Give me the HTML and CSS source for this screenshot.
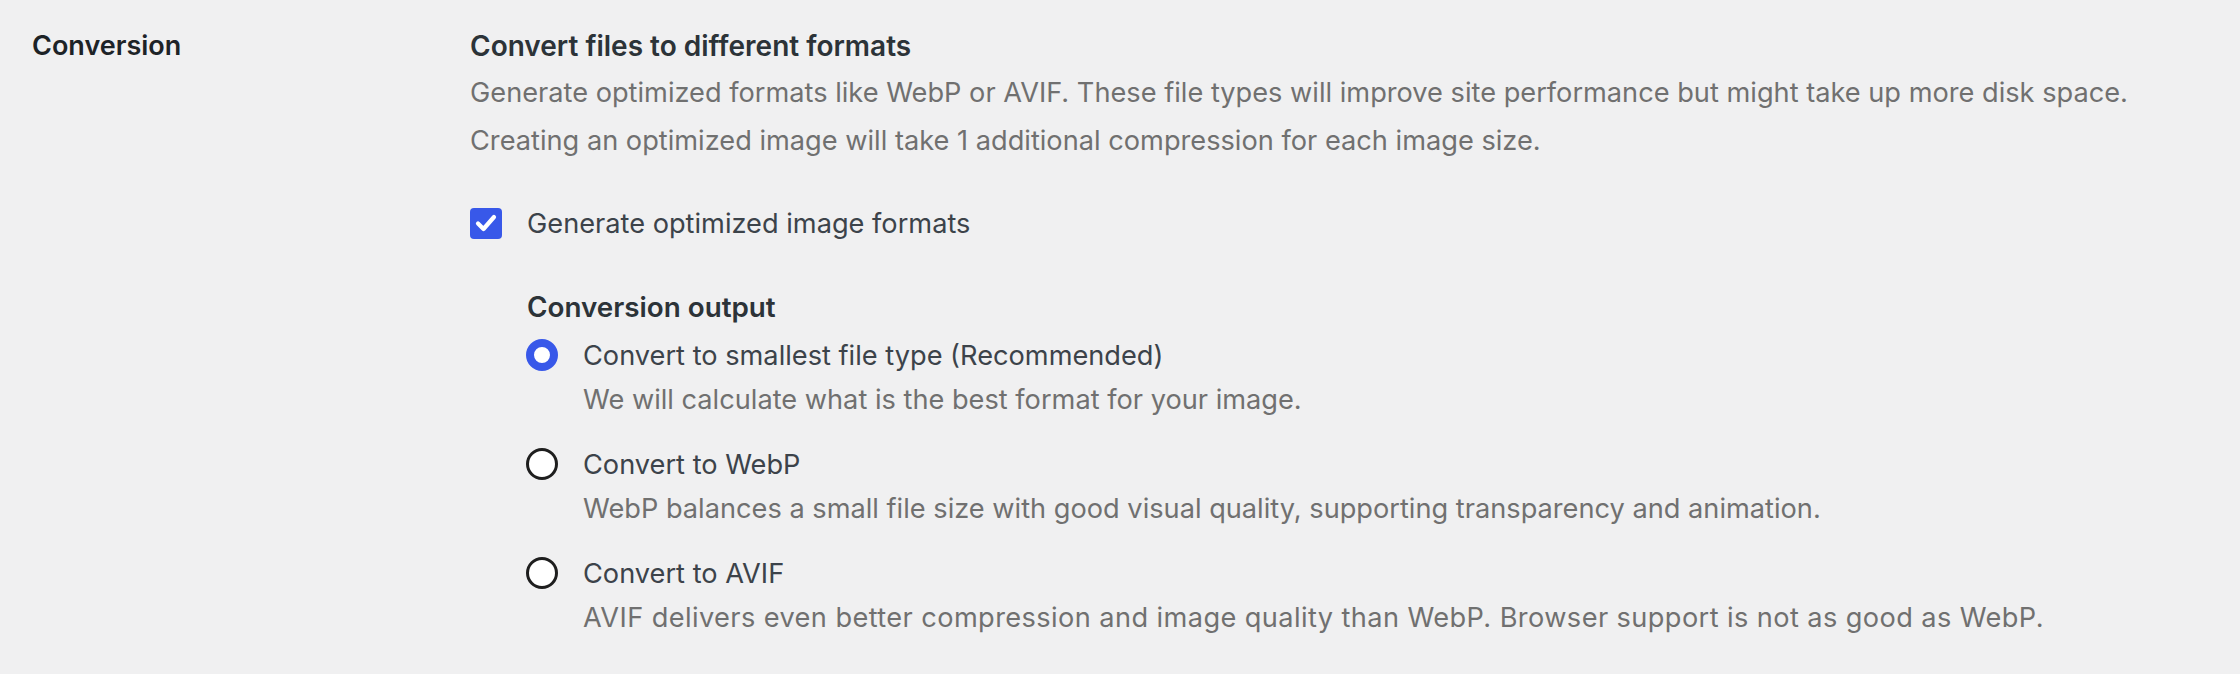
FILE: index.html
```html
<!DOCTYPE html>
<html>
<head>
    <title>Conversion settings</title>
    <link rel="stylesheet" href="styles.css">
</head>
<body>
    <div class="settings-row">
        <div class="row-label">Conversion</div>

        <div class="row-content">
            <h3 class="section-title">Convert files to different formats</h3>
            <p class="section-desc">Generate optimized formats like WebP or AVIF. These file types will improve site performance but might take up more disk space.<br>Creating an optimized image will take 1 additional compression for each image size.</p>

            <!-- Main toggle -->
            <label class="check-row">
                <span class="check-box">
                    <svg width="22" height="18" viewBox="0 0 22 18"><path d="M3 9.5 L8.5 15 L19 3" fill="none" stroke="#fff" stroke-width="4.2" stroke-linecap="round" stroke-linejoin="round"/></svg>
                </span>
                <span>Generate optimized image formats</span>
            </label>

            <!-- Output options -->
            <div class="output-group">
                <div class="output-title">Conversion output</div>

                <div class="radio-list">
                    <div class="radio-option">
                        <label class="radio-row">
                            <span class="radio-dot checked"></span>
                            <span>Convert to smallest file type (Recommended)</span>
                        </label>
                        <div class="radio-desc">We will calculate what is the best format for your image.</div>
                    </div>

                    <div class="radio-option">
                        <label class="radio-row">
                            <span class="radio-dot"></span>
                            <span>Convert to WebP</span>
                        </label>
                        <div class="radio-desc">WebP balances a small file size with good visual quality, supporting transparency and animation.</div>
                    </div>

                    <div class="radio-option">
                        <label class="radio-row">
                            <span class="radio-dot"></span>
                            <span>Convert to AVIF</span>
                        </label>
                        <div class="radio-desc wide">AVIF delivers even better compression and image quality than WebP. Browser support is not as good as WebP.</div>
                    </div>
                </div>
            </div>
        </div>
    </div>
</body>
</html>
```

FILE: styles.css
```css
body {
    margin: 0;
    background: #f0f0f1;
    font-family: Inter, "Noto Sans", sans-serif;
    color: #2c3338;
}

.settings-row {
    display: grid;
    grid-template-columns: 438px 1fr;
    padding: 26px 0 0 32px;
}

.row-label {
    font-size: 27px;
    line-height: 40px;
    font-weight: 600;
    color: #1d2327;
}

.section-title {
    margin: 0;
    font-size: 28px;
    line-height: 40px;
    font-weight: 600;
    color: #2c3338;
}

.section-desc {
    margin: 3px 0 0;
    font-size: 27.2px;
    line-height: 48px;
    color: #707070;
}

.check-row {
    display: flex;
    align-items: center;
    gap: 25px;
    margin-top: 38px;
    height: 40px;
    font-size: 27.2px;
    color: #3c434a;
}

.check-box {
    width: 32px;
    height: 31px;
    border-radius: 4px;
    background: #3858e9;
    display: flex;
    align-items: center;
    justify-content: center;
}

.output-group {
    margin: 44px 0 0 57px;
}

.output-title {
    font-size: 27.8px;
    line-height: 40px;
    font-weight: 600;
}

.radio-list {
    display: flex;
    flex-direction: column;
    gap: 19px;
    margin-top: 6px;
}

.radio-row {
    display: flex;
    align-items: center;
    gap: 25px;
    height: 44px;
    font-size: 27.2px;
    color: #3c434a;
}

.radio-dot {
    width: 32px;
    height: 32px;
    box-sizing: border-box;
    border-radius: 50%;
    border: 3px solid #1e1e1e;
    background: #fff;
    margin-left: -1px;
}

.radio-dot.checked {
    border: 8px solid #3858e9;
}

.radio-desc {
    margin-left: 56px;
    font-size: 27.2px;
    line-height: 46px;
    color: #707070;
}

.radio-desc.wide {
    letter-spacing: 0.4px;
}
```
